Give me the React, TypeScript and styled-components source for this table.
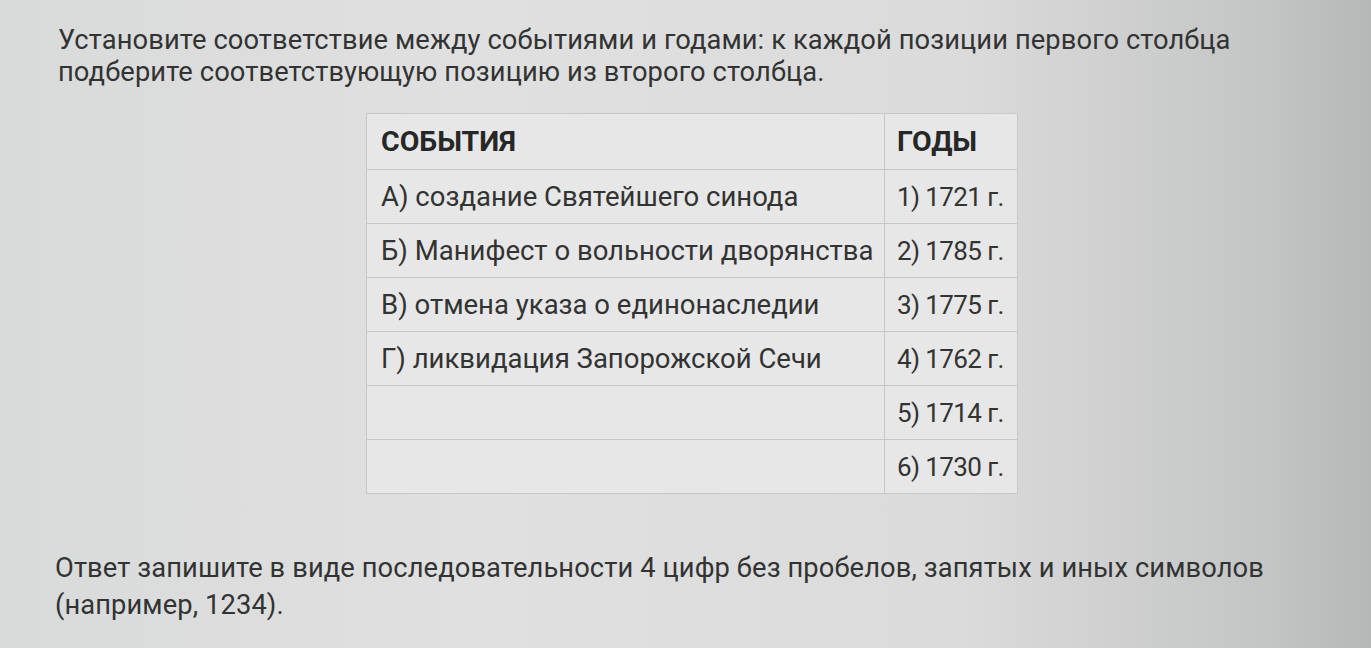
import React from "react";
import styled, { createGlobalStyle } from "styled-components";

const Global = createGlobalStyle`
  html, body { margin: 0; padding: 0; }
  body {
    width: 1371px;
    height: 648px;
    overflow: hidden;
    background: linear-gradient(90deg, #d9dbda 0%, #dfe0df 35%, #dadbda 70%, #c4c5c5 92%, #b6b7b7 100%);
    font-family: Roboto, "Noto Sans", sans-serif;
    color: #333434;
  }
`;

const Page = styled.div`
  padding: 24px 0 0 58px;
  display: flex;
  flex-direction: column;
`;

const Paragraph = styled.p<{ $left?: number; $top?: number; $lh?: number }>`
  margin: ${(p) => p.$top ?? 0}px 0 0 ${(p) => p.$left ?? 0}px;
  font-size: 27.3px;
  line-height: ${(p) => p.$lh ?? 32}px;
  letter-spacing: 0.1px;
  color: #323333;
  white-space: nowrap;
`;

const TableWrap = styled.div`
  margin: 25px 0 0 308px;
`;

const Table = styled.table`
  border-collapse: collapse;
  width: 652px;
  background: #e6e7e6;
`;

const Row = styled.tr<{ $head?: boolean }>`
  height: ${(p) => (p.$head ? 56 : 54)}px;
`;

const Cell = styled.td<{ $head?: boolean; $narrow?: boolean }>`
  border: 1.5px solid #c6c7c7;
  padding: 0 0 0 ${(p) => (p.$narrow ? 12 : 14)}px;
  width: ${(p) => (p.$narrow ? "120px" : "auto")};
  font-size: ${(p) => (p.$head ? 28.5 : p.$narrow ? 26 : 27.5)}px;
  font-weight: ${(p) => (p.$head ? 700 : 400)};
  text-transform: ${(p) => (p.$head ? "uppercase" : "none")};
  letter-spacing: ${(p) => (p.$narrow && !p.$head ? "-0.6px" : "0")};
  color: ${(p) => (p.$head ? "#262727" : "#323333")};
  vertical-align: middle;
  white-space: nowrap;
`;

const rows: [string, string][] = [
  ["А) создание Святейшего синода", "1) 1721 г."],
  ["Б) Манифест о вольности дворянства", "2) 1785 г."],
  ["В) отмена указа о единонаследии", "3) 1775 г."],
  ["Г) ликвидация Запорожской Сечи", "4) 1762 г."],
  ["", "5) 1714 г."],
  ["", "6) 1730 г."],
];

export default function App() {
  return (
    <>
      <Global />
      <Page>
        <Paragraph>
          Установите соответствие между событиями и годами: к каждой позиции первого столбца
          <br />
          подберите соответствующую позицию из второго столбца.
        </Paragraph>
        <TableWrap>
          <Table>
            <tbody>
              <Row $head>
                <Cell $head>События</Cell>
                <Cell $head $narrow>Годы</Cell>
              </Row>
              {rows.map(([a, b], i) => (
                <Row key={i}>
                  <Cell>{a}</Cell>
                  <Cell $narrow>{b}</Cell>
                </Row>
              ))}
            </tbody>
          </Table>
        </TableWrap>
        <Paragraph $left={-3} $top={56} $lh={37}>
          Ответ запишите в виде последовательности 4 цифр без пробелов, запятых и иных символов
          <br />
          (например, 1234).
        </Paragraph>
      </Page>
    </>
  );
}
